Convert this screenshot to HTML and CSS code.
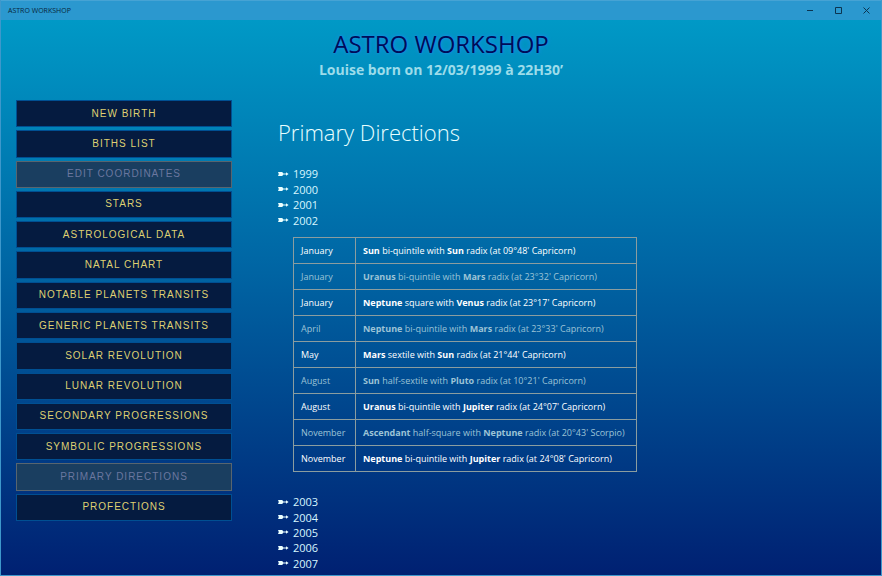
FILE: index.html
```html
<!DOCTYPE html>
<html lang="en">
<head>
<meta charset="utf-8">
<meta name="viewport" content="width=device-width, initial-scale=1">
<title>ASTRO WORKSHOP</title>
<link rel="stylesheet" href="styles.css">
</head>
<body>
<svg class="defs" aria-hidden="true">
  <symbol id="arrow" viewBox="0 0 11 6">
    <path d="M0 1H4.2L5.4 2.5H8V1.2L10.6 3L8 4.8V3.5H5.4L4.2 5H0L.8 3Z"/>
  </symbol>
</svg>
<div class="titlebar">
  <span class="caption">ASTRO WORKSHOP</span>
  <div class="controls">
    <button type="button" aria-label="Minimize"><svg viewBox="0 0 7 7"><path d="M0 3.5H6"/></svg></button>
    <button type="button" aria-label="Maximize"><svg viewBox="0 0 7 7"><path d="M.5.5H6.5V6.5H.5Z"/></svg></button>
    <button type="button" aria-label="Close"><svg viewBox="0 0 7 7"><path d="M.5.5L6.5 6.5M6.5.5L.5 6.5"/></svg></button>
  </div>
</div>
<header class="header">
  <h1>ASTRO WORKSHOP</h1>
  <p>Louise born on 12/03/1999 à 22H30’</p>
</header>
<div class="layout">
  <nav class="menu">
    <button type="button">NEW BIRTH</button>
    <button type="button">BITHS LIST</button>
    <button type="button" disabled>EDIT COORDINATES</button>
    <button type="button">STARS</button>
    <button type="button">ASTROLOGICAL DATA</button>
    <button type="button">NATAL CHART</button>
    <button type="button">NOTABLE PLANETS TRANSITS</button>
    <button type="button">GENERIC PLANETS TRANSITS</button>
    <button type="button">SOLAR REVOLUTION</button>
    <button type="button">LUNAR REVOLUTION</button>
    <button type="button">SECONDARY PROGRESSIONS</button>
    <button type="button">SYMBOLIC PROGRESSIONS</button>
    <button type="button" disabled>PRIMARY DIRECTIONS</button>
    <button type="button">PROFECTIONS</button>
  </nav>
  <main class="content">
    <h2>Primary Directions</h2>
    <div class="years before">
      <a href="#1999"><svg><use href="#arrow"/></svg>1999</a>
      <a href="#2000"><svg><use href="#arrow"/></svg>2000</a>
      <a href="#2001"><svg><use href="#arrow"/></svg>2001</a>
      <a href="#2002"><svg><use href="#arrow"/></svg>2002</a>
    </div>
    <table class="directions">
      <tr><td>January</td><td><b>Sun</b> bi-quintile with <b>Sun</b> radix (at 09°48' Capricorn)</td></tr>
      <tr><td>January</td><td><b>Uranus</b> bi-quintile with <b>Mars</b> radix (at 23°32' Capricorn)</td></tr>
      <tr><td>January</td><td><b>Neptune</b> square with <b>Venus</b> radix (at 23°17' Capricorn)</td></tr>
      <tr><td>April</td><td><b>Neptune</b> bi-quintile with <b>Mars</b> radix (at 23°33' Capricorn)</td></tr>
      <tr><td>May</td><td><b>Mars</b> sextile with <b>Sun</b> radix (at 21°44' Capricorn)</td></tr>
      <tr><td>August</td><td><b>Sun</b> half-sextile with <b>Pluto</b> radix (at 10°21' Capricorn)</td></tr>
      <tr><td>August</td><td><b>Uranus</b> bi-quintile with <b>Jupiter</b> radix (at 24°07' Capricorn)</td></tr>
      <tr><td>November</td><td><b>Ascendant</b> half-square with <b>Neptune</b> radix (at 20°43' Scorpio)</td></tr>
      <tr><td>November</td><td><b>Neptune</b> bi-quintile with <b>Jupiter</b> radix (at 24°08' Capricorn)</td></tr>
    </table>
    <div class="years after">
      <a href="#2003"><svg><use href="#arrow"/></svg>2003</a>
      <a href="#2004"><svg><use href="#arrow"/></svg>2004</a>
      <a href="#2005"><svg><use href="#arrow"/></svg>2005</a>
      <a href="#2006"><svg><use href="#arrow"/></svg>2006</a>
      <a href="#2007"><svg><use href="#arrow"/></svg>2007</a>
    </div>
  </main>
</div>
</body>
</html>
```
FILE: styles.css
```css
* { box-sizing: border-box; }

body {
  margin: 0;
  min-height: 100vh;
  border: 1px solid #3e98cb;
  border-top: 0;
  background: linear-gradient(#0099c6 20px, #0067a5 45%, #002072) fixed;
  font-family: "Open Sans", "Noto Sans", sans-serif;
  color: #e8ffff;
}

.defs { position: absolute; width: 0; height: 0; }

.titlebar {
  display: flex;
  align-items: center;
  justify-content: space-between;
  height: 20px;
  padding-left: 7px;
  border-top: 1px solid #46a3d4;
  background: #2b98cf;
  color: #07263c;
}
.caption { font-size: 7px; line-height: 10px; }
.controls { display: flex; padding-right: 1px; }
.controls button {
  display: grid;
  place-items: center;
  width: 28px;
  height: 19px;
  padding: 0;
  border: 0;
  background: none;
}
.controls svg {
  width: 7px;
  height: 7px;
  fill: none;
  stroke: #0c3450;
  stroke-width: 1;
}

.header { padding-top: 8px; text-align: center; }
.header h1 {
  margin: 0;
  color: #000b59;
  font-size: 24px;
  font-weight: 400;
  line-height: 32px;
  text-shadow: 0 0 4px #1a8fe6, 0 0 2px #1a8fe6;
}
.header p {
  margin: 0;
  color: #9cdcea;
  font-size: 14px;
  font-weight: 700;
  line-height: 20px;
}

.layout { display: flex; padding: 20px 15px 0; }

.menu {
  display: grid;
  grid-auto-rows: 1fr;
  gap: 3px;
  flex: none;
  width: 216px;
  height: 421px;
}
.menu button {
  padding: 0;
  border: 1px solid #004f92;
  background: #051b40;
  color: #dfd072;
  font: 10px/12px "Liberation Sans", sans-serif;
  letter-spacing: 1px;
}
.menu button:disabled {
  border-color: #58656f;
  background: #1a3e60;
  color: #6b779f;
}

.content { flex: 1; margin-left: 46px; }
.content h2 {
  margin: 15px 0 0;
  font-size: 22px;
  font-weight: 300;
  line-height: 34px;
}

.years { display: grid; grid-auto-rows: 1fr; }
.before { height: 62px; margin-top: 17px; }
.after { height: 77px; margin-top: 22px; }
.years a {
  display: flex;
  align-items: center;
  gap: 4px;
  color: #d8f6ff;
  font-size: 11px;
  line-height: 15px;
  text-decoration: none;
}
.years svg { width: 11px; height: 6px; fill: #eaffff; }

.directions {
  width: 344px;
  margin: 9px 0 0 15px;
  border-collapse: collapse;
  color: #fff;
  font-size: 9px;
  line-height: 13px;
}
.directions td {
  height: 26px;
  padding: 0 7px;
  border: 1px solid #8b9d9f;
}
.directions td:first-child { width: 62px; }
.directions tr:nth-child(even) { color: #9cc3d6; }
```
